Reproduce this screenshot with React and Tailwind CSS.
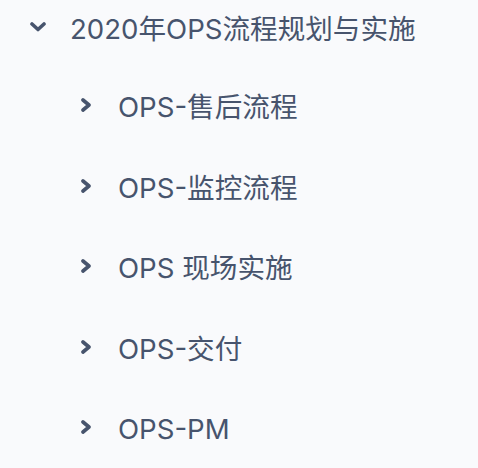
import React from 'react';

const children = ['OPS-售后流程', 'OPS-监控流程', 'OPS 现场实施', 'OPS-交付', 'OPS-PM'];

const ChevronDown = () => (
  <svg width="16" height="10" viewBox="0 0 16 10" className="shrink-0 mb-[6px]">
    <path d="M2 2 L8 7.5 L14 2" fill="none" stroke="#47546d" strokeWidth="3.6" strokeLinecap="round" strokeLinejoin="round" />
  </svg>
);

const ChevronRight = () => (
  <svg width="11" height="14" viewBox="0 0 11 14" className="shrink-0 mb-[6px]">
    <path d="M2 2 L8 7 L2 12" fill="none" stroke="#47546d" strokeWidth="3.6" strokeLinecap="round" strokeLinejoin="round" />
  </svg>
);

const App = () => {
  return (
    <div
      className="w-[478px] h-[468px] bg-[#f9fafc] text-[#47546d] overflow-hidden"
      style={{ fontFamily: 'Inter, "Noto Sans CJK SC", sans-serif' }}
    >
      <div className="flex items-center h-[60px] pl-[30px]">
        <ChevronDown />
        <span className="ml-[24px] text-[27.6px] leading-none">2020年OPS流程规划与实施</span>
      </div>
      <ul className="pt-[8px]">
        {children.map((name) => (
          <li key={name} className="flex items-center h-[80.5px] pl-[81px]">
            <ChevronRight />
            <span className="ml-[26px] text-[27.6px] leading-none">{name}</span>
          </li>
        ))}
      </ul>
    </div>
  );
};

export default App;
